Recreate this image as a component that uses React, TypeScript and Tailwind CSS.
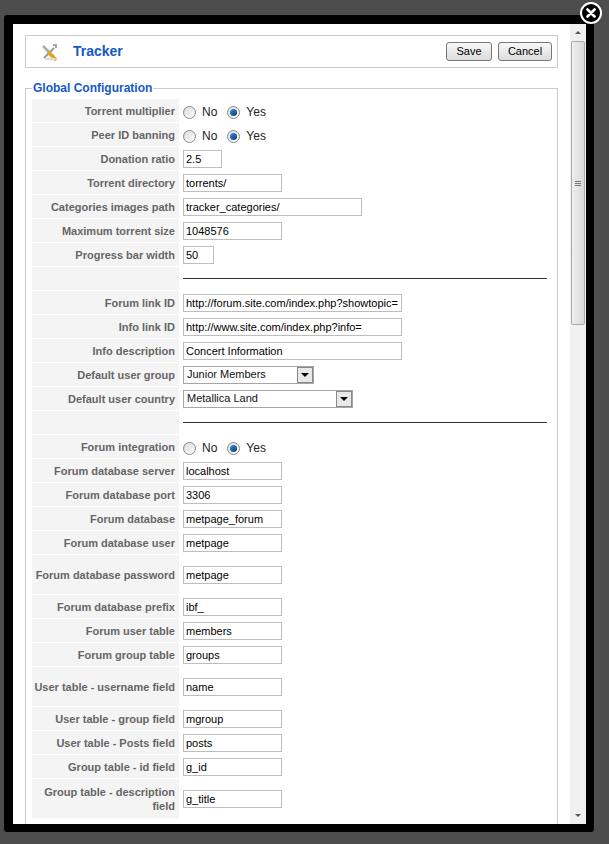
import React from "react";

type Row =
  | { kind: "radio"; label: string }
  | { kind: "text"; label: string; value: string; w: string; tall?: boolean }
  | { kind: "select"; label: string; value: string; w: string }
  | { kind: "sep" };

const rows: Row[] = [
  { kind: "radio", label: "Torrent multiplier" },
  { kind: "radio", label: "Peer ID banning" },
  { kind: "text", label: "Donation ratio", value: "2.5", w: "w-[39px]" },
  { kind: "text", label: "Torrent directory", value: "torrents/", w: "w-[99px]" },
  { kind: "text", label: "Categories images path", value: "tracker_categories/", w: "w-[179px]" },
  { kind: "text", label: "Maximum torrent size", value: "1048576", w: "w-[99px]" },
  { kind: "text", label: "Progress bar width", value: "50", w: "w-[31px]" },
  { kind: "sep" },
  { kind: "text", label: "Forum link ID", value: "http://forum.site.com/index.php?showtopic=", w: "w-[219px]" },
  { kind: "text", label: "Info link ID", value: "http://www.site.com/index.php?info=", w: "w-[219px]" },
  { kind: "text", label: "Info description", value: "Concert Information", w: "w-[219px]" },
  { kind: "select", label: "Default user group", value: "Junior Members", w: "w-[131px]" },
  { kind: "select", label: "Default user country", value: "Metallica Land", w: "w-[170px]" },
  { kind: "sep" },
  { kind: "radio", label: "Forum integration" },
  { kind: "text", label: "Forum database server", value: "localhost", w: "w-[99px]" },
  { kind: "text", label: "Forum database port", value: "3306", w: "w-[99px]" },
  { kind: "text", label: "Forum database", value: "metpage_forum", w: "w-[99px]" },
  { kind: "text", label: "Forum database user", value: "metpage", w: "w-[99px]" },
  { kind: "text", label: "Forum database password", value: "metpage", w: "w-[99px]", tall: true },
  { kind: "text", label: "Forum database prefix", value: "ibf_", w: "w-[99px]" },
  { kind: "text", label: "Forum user table", value: "members", w: "w-[99px]" },
  { kind: "text", label: "Forum group table", value: "groups", w: "w-[99px]" },
  { kind: "text", label: "User table - username field", value: "name", w: "w-[99px]", tall: true },
  { kind: "text", label: "User table - group field", value: "mgroup", w: "w-[99px]" },
  { kind: "text", label: "User table - Posts field", value: "posts", w: "w-[99px]" },
  { kind: "text", label: "Group table - id field", value: "g_id", w: "w-[99px]" },
  { kind: "text", label: "Group table - description field", value: "g_title", w: "w-[99px]", tall: true },
];

function Radio({ on }: { on?: boolean }) {
  return (
    <span className="inline-flex h-[13px] w-[13px] items-center justify-center rounded-full border border-[#8a8a8a] bg-gradient-to-br from-[#dcdcdc] to-white">
      {on && <span className="h-[7px] w-[7px] rounded-full bg-gradient-to-br from-[#3a8ad6] to-[#0a3f7a]" />}
    </span>
  );
}

function Value({ row }: { row: Row }) {
  if (row.kind === "radio")
    return (
      <div className="flex items-center gap-[6px] pt-[3px] text-[12px] text-[#222]">
        <Radio /> <span className="mr-[4px]">No</span> <Radio on /> <span>Yes</span>
      </div>
    );
  if (row.kind === "text")
    return (
      <div className={`h-[18px] ${row.w} border border-[#bdbdbd] bg-white px-[2px] text-[11px] leading-[16px] text-black`}>
        {row.value}
      </div>
    );
  if (row.kind === "select")
    return (
      <div className={`flex h-[18px] ${row.w} items-center justify-between border border-[#a5a5a5] bg-white pl-[3px] text-[11px] text-[#111]`}>
        <span>{row.value}</span>
        <span className="flex h-[16px] w-[16px] items-center justify-center border border-[#888] bg-[#e8e8e8]">
          <span className="h-0 w-0 border-x-[4px] border-t-[4px] border-x-transparent border-t-black" />
        </span>
      </div>
    );
  return null;
}

export default function App() {
  return (
    <div className="h-[844px] w-[609px] bg-[#4d4d4d] pt-[15px] pl-[4px]" style={{ fontFamily: '"Liberation Sans", Arial, sans-serif' }}>
      <div className="relative h-[817px] w-[590px] rounded-[3px] bg-black p-[9px] pr-[8px]">
        <div className="absolute -top-[13px] -right-[8px] flex h-[22px] w-[22px] items-center justify-center rounded-full border-2 border-white bg-black">
          <svg width="10" height="10" viewBox="0 0 10 10"><path d="M1.5 1.5 8.5 8.5M8.5 1.5 1.5 8.5" stroke="white" strokeWidth="2.6" strokeLinecap="round" /></svg>
        </div>
        <div className="flex h-[800px] overflow-hidden bg-white">
          <div className="flex-1 overflow-hidden pl-[12px] pr-[12px] pt-[11px]">
            <div className="flex h-[33px] items-center border border-[#ccc] pl-[14px] pr-[5px]">
              <svg width="20" height="20" viewBox="0 0 20 20">
                <path d="M3 4 L14 15" stroke="#aaa" strokeWidth="2.5" />
                <path d="M4 16 L14 6" stroke="#999" strokeWidth="2" />
                <path d="M9 11 L15 17" stroke="#e8a317" strokeWidth="3.5" strokeLinecap="round" />
                <path d="M13 3 l3 0 l0 3" stroke="#aaa" strokeWidth="2" fill="none" />
                <ellipse cx="10" cy="17" rx="6" ry="1.5" fill="#ddd" />
              </svg>
              <span className="ml-[13px] text-[14px] font-bold text-[#1558c8]">Tracker</span>
              <div className="ml-auto flex gap-[6px]">
                <button className="h-[19px] w-[46px] rounded-[3px] border border-[#777] bg-gradient-to-b from-[#f8f8f8] to-[#dcdcdc] text-[11px] text-black">Save</button>
                <button className="h-[19px] w-[54px] rounded-[3px] border border-[#777] bg-gradient-to-b from-[#f8f8f8] to-[#dcdcdc] text-[11px] text-black">Cancel</button>
              </div>
            </div>
            <fieldset className="mt-[11px] border border-[#ccc] px-[6px] pb-[7px]">
              <legend className="px-[1px] text-[12px] font-bold text-[#1558c8]">Global Configuration</legend>
              <div className="flex flex-col gap-px pt-[2px]">
                {rows.map((r, i) => (
                  <div key={i} className="flex">
                    <div
                      className={`flex w-[147px] shrink-0 items-center justify-end bg-[#f4f4f4] pr-[4px] text-right text-[11px] font-bold leading-[14px] text-[#666] ${
                        r.kind !== "sep" && r.tall ? "h-[39px]" : "h-[23px]"
                      }`}
                    >
                      {r.kind !== "sep" ? r.label : ""}
                    </div>
                    <div className="flex flex-1 items-center pl-[4px]">
                      {r.kind === "sep" ? <div className="mr-[4px] h-[2px] flex-1 border-t border-[#333] border-b-[#eee]" /> : <Value row={r} />}
                    </div>
                  </div>
                ))}
              </div>
            </fieldset>
          </div>
          <div className="flex w-[16px] flex-col bg-[#f0f0f0]">
            <div className="flex h-[17px] items-center justify-center">
              <span className="h-0 w-0 border-x-[3px] border-b-[3px] border-x-transparent border-b-[#555]" />
            </div>
            <div className="mx-[1px] h-[284px] rounded-[2px] border border-[#aaa] bg-gradient-to-r from-[#eee] to-[#d8d8d8] flex items-center justify-center">
              <div className="flex flex-col gap-[1px]"><span className="h-px w-[6px] bg-[#777]" /><span className="h-px w-[6px] bg-[#777]" /><span className="h-px w-[6px] bg-[#777]" /></div>
            </div>
            <div className="flex-1" />
            <div className="flex h-[17px] items-center justify-center">
              <span className="h-0 w-0 border-x-[3px] border-t-[3px] border-x-transparent border-t-[#555]" />
            </div>
          </div>
        </div>
      </div>
    </div>
  );
}
